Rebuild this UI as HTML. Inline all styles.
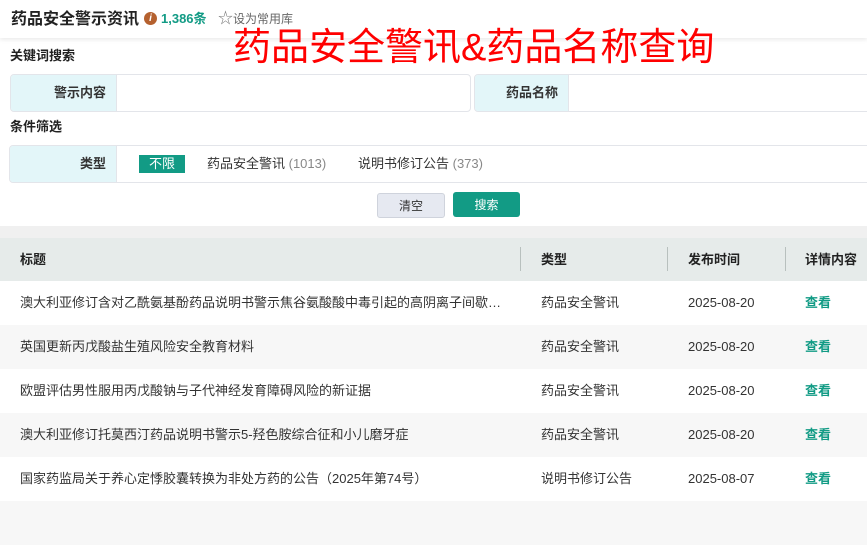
<!DOCTYPE html>
<html><head><meta charset="utf-8"><style>
*{margin:0;padding:0;box-sizing:border-box}
body{width:867px;height:509px;overflow:hidden;background:#fff;font-family:"Liberation Sans","Noto Sans CJK SC",sans-serif;color:#333;position:relative;font-size:13px;line-height:1.2}
.abs{position:absolute;white-space:nowrap}
.box{position:absolute;border:1px solid #e3e5ea;border-radius:4px;overflow:hidden;background:#fff}
.lab{position:absolute;left:0;top:0;bottom:0;background:#e3f6f9;border-right:1px solid #e3e5ea;font-weight:bold;text-align:right;padding-right:10px;display:flex;align-items:center;justify-content:flex-end}
.row{position:absolute;left:0;width:867px;height:44px;font-size:13px}
.row span{position:absolute;top:0;height:44px;line-height:44px}
.g{color:#129b85;font-weight:bold}
</style></head><body>
<div class="abs" style="left:0;top:0;width:867px;height:38px;box-shadow:0 2px 4px rgba(0,0,0,.08)"></div>
<div class="abs" style="left:11px;top:8px;height:24px;line-height:24px;font-size:16px;font-weight:bold;color:#222">药品安全警示资讯</div>
<div class="abs" style="left:144px;top:12px;width:13px;height:13px;border-radius:50%;background:#b5612f;color:#fff;font-size:10px;font-weight:bold;text-align:center;line-height:13px;font-style:italic">i</div>
<div class="abs" style="left:161px;top:7px;height:24px;line-height:24px;font-size:13px;font-weight:bold;color:#129b85">1,386条</div>
<div class="abs" style="left:218px;top:7px;height:24px;line-height:24px;font-size:12px;color:#666"><span style="font-size:15px;color:#777">☆</span>设为常用库</div>
<div class="abs" style="left:233px;top:26px;font-size:38px;color:#f00;line-height:44px">药品安全警讯&amp;药品名称查询</div>
<div class="abs" style="left:10px;top:46px;height:20px;line-height:20px;font-weight:bold;font-size:13px;color:#222">关键词搜索</div>
<div class="box" style="left:10px;top:74px;width:461px;height:38px"><div class="lab" style="width:106px">警示内容</div></div>
<div class="box" style="left:474px;top:74px;width:400px;height:38px"><div class="lab" style="width:94px">药品名称</div></div>
<div class="abs" style="left:10px;top:117px;height:20px;line-height:20px;font-weight:bold;font-size:13px;color:#222">条件筛选</div>
<div class="box" style="left:9px;top:145px;width:870px;height:38px"><div class="lab" style="width:107px">类型</div>
<div class="abs" style="left:129px;top:9px;width:46px;height:18px;background:#129b85;color:#fff;text-align:center;line-height:18px;font-size:13px">不限</div>
<div class="abs" style="left:197px;top:0;height:36px;line-height:36px">药品安全警讯 <span style="color:#888">(1013)</span></div>
<div class="abs" style="left:348px;top:0;height:36px;line-height:36px">说明书修订公告 <span style="color:#888">(373)</span></div></div>
<div class="abs" style="left:377px;top:193px;width:68px;height:25px;background:#e6e9f1;border:1px solid #cfd3dc;border-radius:3px;text-align:center;line-height:25px;font-size:12px">清空</div>
<div class="abs" style="left:453px;top:192px;width:67px;height:25px;background:#129b85;border-radius:3px;color:#fff;text-align:center;line-height:27px;font-size:12px">搜索</div>
<div class="abs" style="left:0;top:226px;width:867px;height:12px;background:#f0f0f0"></div>
<div class="row" style="top:238px;height:43px;background:#e6ebea;font-weight:bold;color:#222">
<span style="left:20px;height:43px;line-height:43px">标题</span><span style="left:541px;height:43px;line-height:43px">类型</span><span style="left:688px;height:43px;line-height:43px">发布时间</span><span style="left:805px;height:43px;line-height:43px">详情内容</span>
<i class="abs" style="left:520px;top:9px;width:1px;height:24px;background:#b8c0be"></i>
<i class="abs" style="left:667px;top:9px;width:1px;height:24px;background:#b8c0be"></i>
<i class="abs" style="left:785px;top:9px;width:1px;height:24px;background:#b8c0be"></i></div>
<div class="row" style="top:281px"><span style="left:20px">澳大利亚修订含对乙酰氨基酚药品说明书警示焦谷氨酸酸中毒引起的高阴离子间歇…</span><span style="left:541px">药品安全警讯</span><span style="left:688px">2025-08-20</span><span class="g" style="left:805px">查看</span></div>
<div class="row" style="top:325px;background:#f7f7f7"><span style="left:20px">英国更新丙戊酸盐生殖风险安全教育材料</span><span style="left:541px">药品安全警讯</span><span style="left:688px">2025-08-20</span><span class="g" style="left:805px">查看</span></div>
<div class="row" style="top:369px"><span style="left:20px">欧盟评估男性服用丙戊酸钠与子代神经发育障碍风险的新证据</span><span style="left:541px">药品安全警讯</span><span style="left:688px">2025-08-20</span><span class="g" style="left:805px">查看</span></div>
<div class="row" style="top:413px;background:#f7f7f7"><span style="left:20px">澳大利亚修订托莫西汀药品说明书警示5-羟色胺综合征和小儿磨牙症</span><span style="left:541px">药品安全警讯</span><span style="left:688px">2025-08-20</span><span class="g" style="left:805px">查看</span></div>
<div class="row" style="top:457px"><span style="left:20px">国家药监局关于养心定悸胶囊转换为非处方药的公告（2025年第74号）</span><span style="left:541px">说明书修订公告</span><span style="left:688px">2025-08-07</span><span class="g" style="left:805px">查看</span></div>
<div class="row" style="top:501px;background:#f7f7f7"></div>
</body></html>
